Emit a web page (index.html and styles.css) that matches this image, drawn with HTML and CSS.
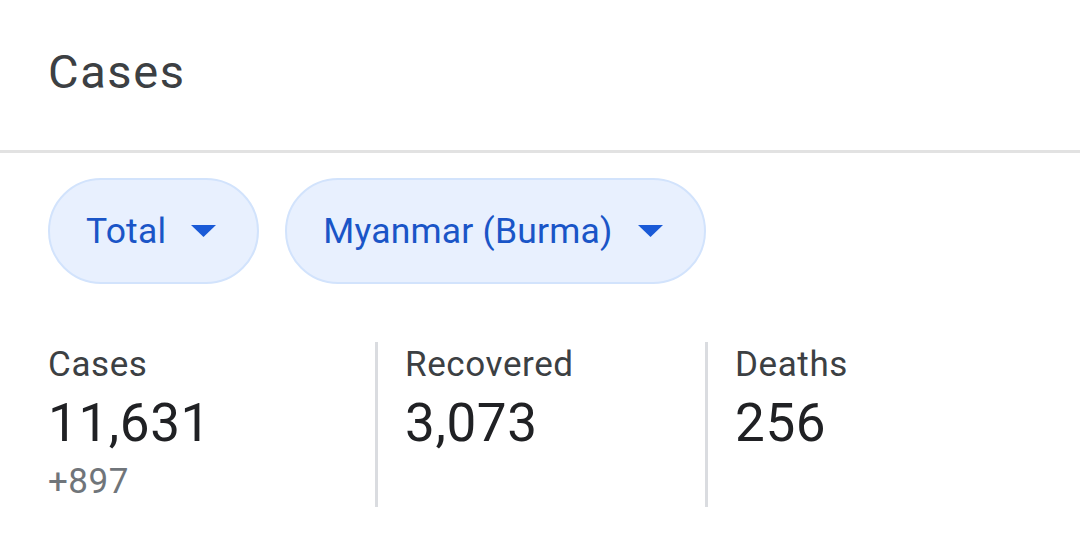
FILE: index.html
```html
<!DOCTYPE html>
<html>
<head>
<meta charset="utf-8">
<link rel="stylesheet" href="styles.css">
</head>
<body>
<div class="header">
  <div class="title">Cases</div>
</div>
<div class="chips">
  <div class="chip"><span class="chip-text">Total</span><svg class="arrow" viewBox="0 0 25 12" width="25" height="12"><path d="M0 0 L25 0 L12.5 12 Z" fill="#1a5ad7"/></svg></div>
  <div class="chip"><span class="chip-text">Myanmar (Burma)</span><svg class="arrow" viewBox="0 0 25 12" width="25" height="12"><path d="M0 0 L25 0 L12.5 12 Z" fill="#1a5ad7"/></svg></div>
</div>
<div class="stats">
  <div class="stat first">
    <div class="label">Cases</div>
    <div class="value">11,631</div>
    <div class="delta">+897</div>
  </div>
  <div class="stat second">
    <div class="label">Recovered</div>
    <div class="value">3,073</div>
  </div>
  <div class="stat third">
    <div class="label">Deaths</div>
    <div class="value">256</div>
  </div>
</div>
</body>
</html>
```
FILE: styles.css
```css
html, body {
  margin: 0;
  padding: 0;
  background: #ffffff;
  font-family: Roboto, "Noto Sans", Arial, sans-serif;
}
.header {
  padding: 44px 0 50px 48px;
  border-bottom: 3px solid #e2e2e2;
}
.title {
  font-size: 47px;
  line-height: 56px;
  color: #3c4043;
  letter-spacing: 1.6px;
}
.chips {
  display: flex;
  gap: 26px;
  padding-left: 48px;
  margin-top: 25px;
}
.chip {
  box-sizing: border-box;
  height: 106px;
  display: flex;
  align-items: center;
  padding: 0 41px 0 36px;
  border: 2px solid #d2e3fc;
  background: #e8f0fe;
  border-radius: 53px;
}
.chip-text {
  font-size: 35.5px;
  line-height: 40px;
  color: #1a55c7;
  letter-spacing: 0.2px;
}
.arrow {
  margin-left: 25px;
  display: block;
}
.stats {
  display: flex;
  padding-left: 48px;
  margin-top: 58px;
}
.stat {
  box-sizing: border-box;
  padding-top: 3px;
  padding-bottom: 5px;
}
.first {
  width: 327px;
}
.second {
  width: 330px;
  border-left: 3px solid #dadce0;
  padding-left: 27px;
}
.third {
  border-left: 3px solid #dadce0;
  padding-left: 27px;
}
.label {
  font-size: 35px;
  line-height: 40px;
  color: #3c4043;
  letter-spacing: 0.6px;
}
.value {
  margin-top: 8px;
  font-size: 53px;
  line-height: 60px;
  color: #202124;
  letter-spacing: 0.6px;
}
.delta {
  margin-top: 9px;
  font-size: 35px;
  line-height: 40px;
  color: #70757a;
  letter-spacing: 0.5px;
}
```
